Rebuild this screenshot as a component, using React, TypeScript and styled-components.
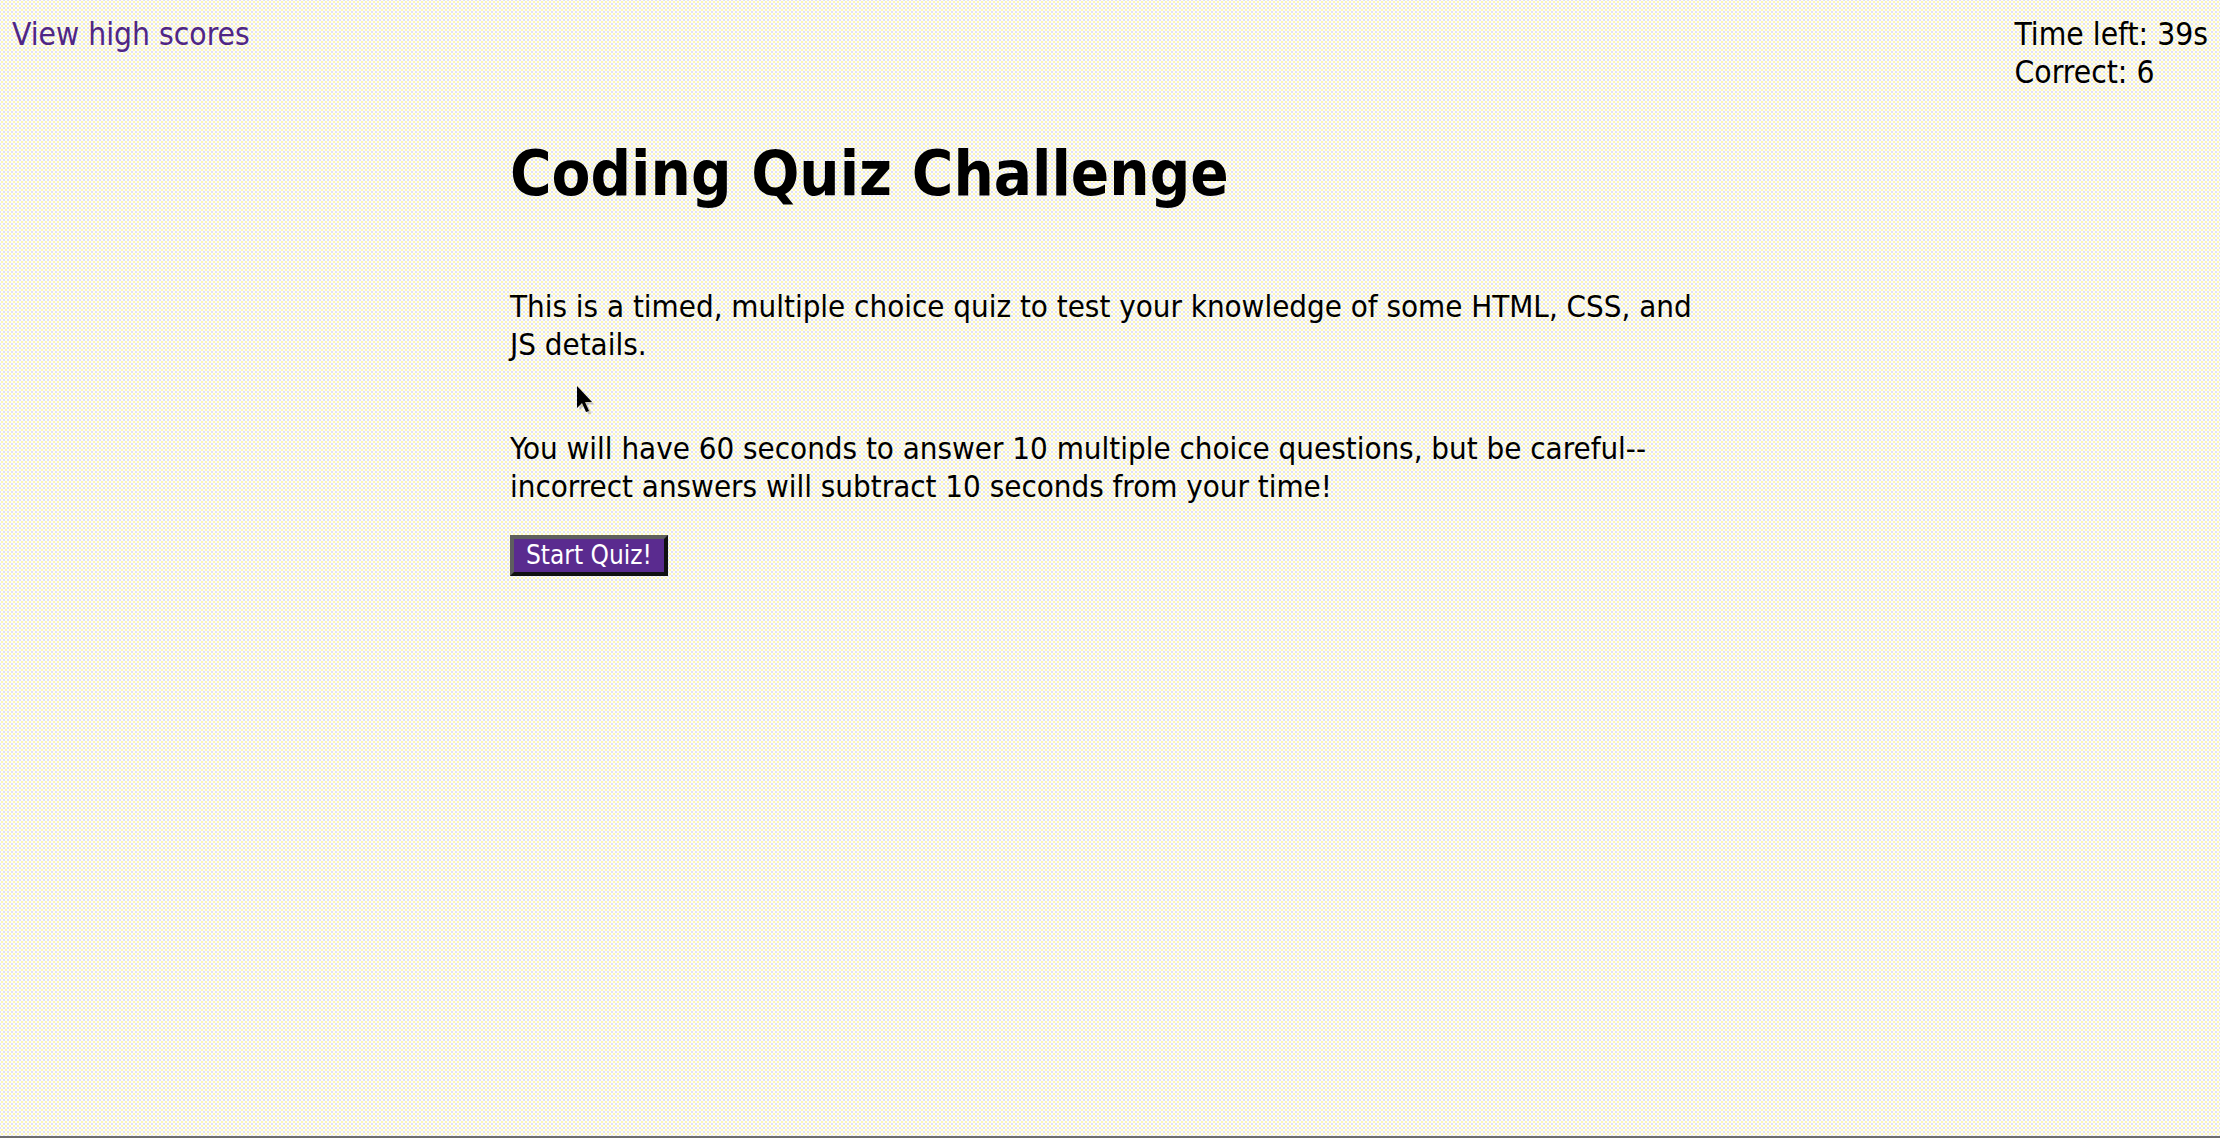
import React from "react";
import styled, { createGlobalStyle } from "styled-components";

const GlobalStyle = createGlobalStyle`
  html, body {
    margin: 0;
    padding: 0;
  }
  body {
    background-color: #fdfdf9;
    background-image:
      radial-gradient(circle, rgba(250, 240, 120, 0.55) 0.7px, transparent 0.9px),
      radial-gradient(circle, rgba(190, 190, 240, 0.45) 0.7px, transparent 0.9px);
    background-size: 4px 4px, 4px 4px;
    background-position: 0 0, 2px 2px;
    font-family: "DejaVu Sans Condensed", "DejaVu Sans", Verdana, sans-serif;
    color: #000;
  }
`;

const Page = styled.div`
  position: relative;
  min-height: 100vh;
  box-sizing: border-box;
  border-bottom: 2px solid #6e6e6e;
  padding: 15px 12px 0 12px;
`;

const Header = styled.header`
  display: flex;
  justify-content: space-between;
  align-items: flex-start;
  font-size: 31.5px;
  line-height: 38px;
`;

const HighScoresLink = styled.a`
  color: #4f2686;
  text-decoration: none;
  cursor: pointer;
`;

const Stats = styled.div`
  display: flex;
  flex-direction: column;
`;

const Main = styled.main`
  width: 1200px;
  margin: 45px auto 0 auto;
`;

const Title = styled.h1`
  font-size: 63px;
  font-weight: bold;
  margin: 0 0 75px 0;
  line-height: 1.2;
`;

const Paragraph = styled.p`
  font-size: 31px;
  line-height: 38px;
  margin: 0 0 66px 0;
  &:last-of-type {
    margin-bottom: 30px;
  }
`;

const StartButton = styled.button`
  font-family: "DejaVu Sans Condensed", "DejaVu Sans", Verdana, sans-serif;
  font-size: 26px;
  line-height: 33px;
  color: #ffffff;
  background: #5a2b8f;
  border-width: 4px;
  border-style: solid;
  border-color: #5e5e5e #111 #111 #5e5e5e;
  padding: 0 12px;
  cursor: pointer;
`;

const Cursor = styled.svg`
  position: absolute;
  left: 576px;
  top: 385px;
  width: 20px;
  height: 32px;
  pointer-events: none;
`;

export default function App() {
  return (
    <>
      <GlobalStyle />
      <Page>
        <Header>
          <HighScoresLink>View high scores</HighScoresLink>
          <Stats>
            <span>Time left: 39s</span>
            <span>Correct: 6</span>
          </Stats>
        </Header>
        <Main>
          <Title>Coding Quiz Challenge</Title>
          <Paragraph>
            This is a timed, multiple choice quiz to test your knowledge of some HTML, CSS, and JS details.
          </Paragraph>
          <Paragraph>
            You will have 60 seconds to answer 10 multiple choice questions, but be careful--incorrect answers will subtract 10 seconds from your time!
          </Paragraph>
          <StartButton>Start Quiz!</StartButton>
        </Main>
        <Cursor viewBox="0 0 20 32">
          <path d="M2 2 L2 24 L7 19 L11 28 L14 27 L10 18 L17 18 Z" fill="rgba(0,0,0,0.18)" transform="translate(1.5 1.5)" />
          <path d="M1 1 L1 23 L6 18 L10 27 L13 26 L9 17 L16 17 Z" fill="#000" />
        </Cursor>
      </Page>
    </>
  );
}
